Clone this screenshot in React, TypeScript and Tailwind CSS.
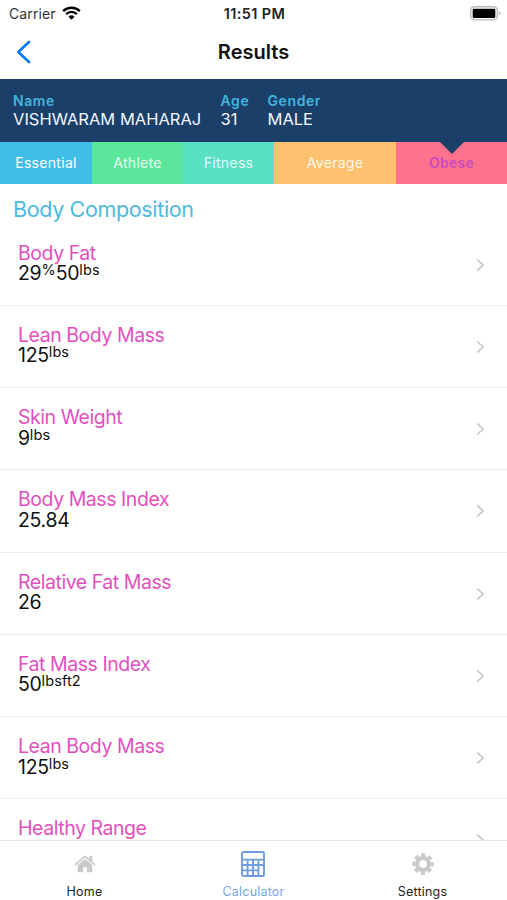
import { clsx } from 'clsx';

interface Part {
  value: string;
  unit?: string;
}

interface Metric {
  id: number;
  title: string;
  parts: Part[];
}

const metrics: Metric[] = [
  { id: 1, title: 'Body Fat', parts: [{ value: '29', unit: '%' }, { value: '50', unit: 'lbs' }] },
  { id: 2, title: 'Lean Body Mass', parts: [{ value: '125', unit: 'lbs' }] },
  { id: 3, title: 'Skin Weight', parts: [{ value: '9', unit: 'lbs' }] },
  { id: 4, title: 'Body Mass Index', parts: [{ value: '25.84' }] },
  { id: 5, title: 'Relative Fat Mass', parts: [{ value: '26' }] },
  { id: 6, title: 'Fat Mass Index', parts: [{ value: '50', unit: 'lbsft2' }] },
  { id: 7, title: 'Lean Body Mass', parts: [{ value: '125', unit: 'lbs' }] },
  { id: 8, title: 'Healthy Range', parts: [] },
];

const categories = [
  { name: 'Essential', style: 'w-[92px] bg-[#42bde8] text-white' },
  { name: 'Athlete', style: 'w-[91px] bg-[#5ae79b] text-white/85' },
  { name: 'Fitness', style: 'w-[91px] bg-[#59e0c5] text-white/85' },
  { name: 'Average', style: 'w-[122px] bg-[#fdc06f] text-white/85' },
  { name: 'Obese', style: 'flex-1 bg-[#ff728d] text-[#c94bc0] font-semibold', active: true },
];

const person = [
  { label: 'Name', value: 'VISHWARAM MAHARAJ', style: 'w-[207.5px]' },
  { label: 'Age', value: '31', style: 'w-[47px]' },
  { label: 'Gender', value: 'MALE', style: '' },
];

function StatusBar() {
  return (
    <div className="grid h-7 shrink-0 grid-cols-3 items-center pl-[9px] pr-[6px] text-[14px] leading-none">
      <div className="flex items-center gap-[6px]">
        <span className="tracking-[0.1px] text-[#333]">Carrier</span>
        <svg className="-mt-[2px]" width="19" height="14" viewBox="0 0 19 14" fill="none" stroke="#000" strokeWidth="2.4">
          <path d="M1.2 5.1a11.8 11.8 0 0 1 16.6 0" />
          <path d="M4.1 8.1a7.7 7.7 0 0 1 10.8 0" />
          <path d="M9.5 13.8 6.5 10.8a4.3 4.3 0 0 1 6 0Z" fill="#000" stroke="none" />
        </svg>
      </div>
      <span className="-ml-[1px] text-center text-[14.5px] font-semibold tracking-[0.35px] text-[#222]">11:51 PM</span>
      <svg className="-mt-[2px] justify-self-end" width="31" height="15" viewBox="0 0 31 15">
        <rect x="0.7" y="0.7" width="26.6" height="13.2" rx="3.8" fill="#fff" stroke="#b9b9b9" strokeWidth="1.4" />
        <rect x="2.7" y="2.7" width="22.6" height="9.3" rx="1.3" fill="#000" />
        <path d="M29 5.2c2 .8 2 3.4 0 4.2Z" fill="#b0b0b0" />
      </svg>
    </div>
  );
}

function HomeIcon() {
  return (
    <svg width="22" height="20" viewBox="0 0 22 20" fill="#c9c9c9">
      <path d="M11 1.2 0.5 10.2l1.1 1.2L11 3.5l9.4 7.9 1.1-1.2-3.3-2.9V1.8h-2.8v3.1Z" />
      <path d="M11 4.9 3.7 11v6.3q0 1 1 1h4.4v-5.1h3.8v5.1h4.4q1 0 1-1V11Z" />
    </svg>
  );
}

function CalculatorIcon() {
  return (
    <svg width="24" height="26" viewBox="0 0 24 26" fill="none" stroke="#6f9cde" strokeWidth="1.9">
      <rect x="1" y="1" width="22" height="24" rx="1.5" />
      <path d="M1 8.6h22M6.6 8.6V25M12 8.6V25M17.4 8.6V25M1 14h22M1 19.4h16.4" />
    </svg>
  );
}

function SettingsIcon() {
  return (
    <svg width="22" height="22" viewBox="0 0 22 22" fill="none">
      <circle cx="11" cy="11" r="6" stroke="#c9c9c9" strokeWidth="4.2" />
      <circle cx="11" cy="11" r="9" stroke="#c9c9c9" strokeWidth="3.4" strokeDasharray="4.2 2.869" strokeDashoffset="2.1" />
    </svg>
  );
}

function MetricRow({ metric }: { metric: Metric }) {
  return (
    <div className="flex h-[82.25px] shrink-0 items-start justify-between border-b-[1.5px] border-[#ececec] pl-[18px] pr-[22px] pt-[19px]">
      <div className="text-[19.5px] leading-5">
        <h3 className="font-[380] tracking-[-0.45px] text-[#e34fbe]">{metric.title}</h3>
        <p className="flex pt-[0.5px] tracking-[-0.3px] text-[#111]">
          {metric.parts.map((p) => (
            <span key={p.value} className="flex">
              {p.value}
              {p.unit && <span className="-mt-[3px] text-[14.5px] tracking-[0.1px]">{p.unit}</span>}
            </span>
          ))}
        </p>
      </div>
      <svg className="mt-[15px]" width="9" height="14" viewBox="0 0 9 14" fill="none" stroke="#c6c6c8" strokeWidth="1.7">
        <path d="m1.3 1.5 5.7 5.5-5.7 5.5" />
      </svg>
    </div>
  );
}

export default function App() {
  return (
    <div className="flex h-[900px] w-[507px] flex-col overflow-hidden bg-white font-['Inter','Liberation_Sans',sans-serif]">
      <StatusBar />

      {/* Header */}
      <header className="grid h-[51px] shrink-0 grid-cols-3 items-center px-4 pb-[3px]">
        <svg width="16" height="24" viewBox="0 0 16 24" fill="none" stroke="#087bf4" strokeWidth="2.7" strokeLinecap="round" strokeLinejoin="round">
          <path d="M13 2 2.3 12 13 22" />
        </svg>
        <h1 className="text-center text-[20px] font-semibold text-[#111]">Results</h1>
      </header>

      {/* Person */}
      <section className="flex h-[63px] shrink-0 bg-[#1a3f69] pl-[13px] pt-[12px]">
        {person.map((p) => (
          <div key={p.label} className={p.style}>
            <p className="text-[14px] font-semibold leading-[19px] tracking-[0.6px] text-[#42b5de]">{p.label}</p>
            <p className="whitespace-nowrap text-[16.5px] leading-[19px] text-[#f2f6fb]">{p.value}</p>
          </div>
        ))}
      </section>

      {/* Categories */}
      <div className="flex h-[41.7px] shrink-0 text-[14px] tracking-[0.3px]">
        {categories.map((c) => (
          <div key={c.name} className={clsx('relative flex items-center justify-center', c.style)}>
            {c.name}
            {c.active && (
              <svg className="absolute left-1/2 top-0 -translate-x-1/2" width="24" height="12" viewBox="0 0 24 12" fill="#1a3f69">
                <path d="M0 0h24L12 12Z" />
              </svg>
            )}
          </div>
        ))}
      </div>

      {/* List */}
      <main className="flex min-h-0 flex-1 flex-col overflow-hidden">
        <h2 className="h-[40px] shrink-0 pl-[13px] pt-[11px] text-[21.5px] font-normal leading-7 tracking-[-0.35px] text-[#4dbae1]">Body Composition</h2>
        {metrics.map((m) => (
          <MetricRow key={m.id} metric={m} />
        ))}
      </main>

      {/* Tabs */}
      <nav className="grid h-[60px] shrink-0 grid-cols-3 border-t-[1.5px] border-[#e9e9e9] bg-white text-[12.5px] tracking-[0.2px] text-[#222]">
        <div className="flex flex-col items-center">
          <div className="flex h-[45px] items-center"><HomeIcon /></div>
          <span className="leading-none">Home</span>
        </div>
        <div className="flex flex-col items-center text-[#7ba5e2]">
          <div className="flex h-[45px] items-center pr-[2px]"><CalculatorIcon /></div>
          <span className="leading-none">Calculator</span>
        </div>
        <div className="flex flex-col items-center">
          <div className="flex h-[45px] items-center"><SettingsIcon /></div>
          <span className="leading-none">Settings</span>
        </div>
      </nav>
    </div>
  );
}
